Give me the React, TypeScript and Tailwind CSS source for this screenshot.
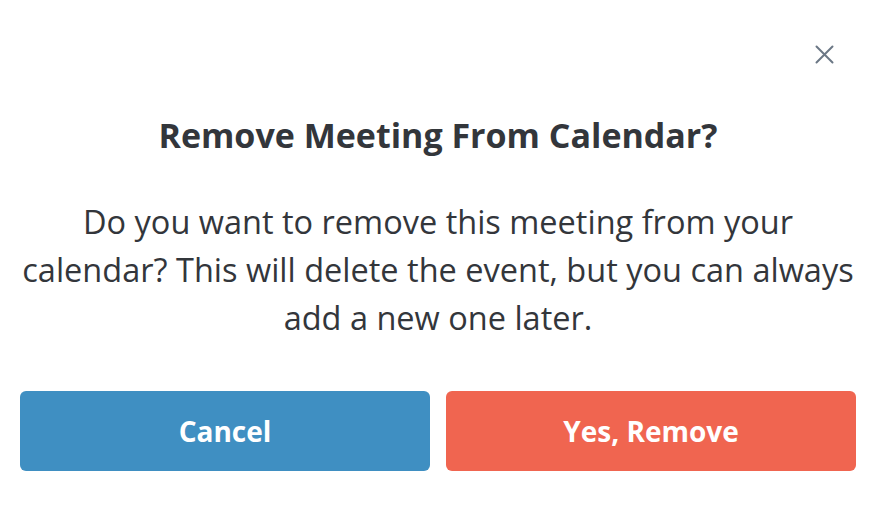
export default function App() {
  return (
    <div className="relative flex h-[524px] w-[878px] flex-col bg-white pl-5 pr-[22px] font-['Open_Sans','Noto_Sans',sans-serif] text-[#33363b]">
      <button
        type="button"
        className="absolute left-[814px] top-[44px] text-[#6b7785]"
        aria-label="Close"
      >
        <svg width="21" height="21" viewBox="0 0 21 21" fill="none" stroke="currentColor" strokeWidth="2" strokeLinecap="round">
          <path d="M2.5 2.5L18.5 18.5M18.5 2.5L2.5 18.5" />
        </svg>
      </button>
      <h2 className="mt-[113px] text-center text-[34px] font-bold leading-[44px]">
        Remove Meeting From Calendar?
      </h2>
      <p className="mt-[41px] text-center text-[32.5px] leading-[48px]">
        Do you want to remove this meeting from your calendar? This will delete the event, but you can always add a new one later.
      </p>
      <div className="mt-[49px] grid grid-cols-2 gap-4">
        <button type="button" className="h-20 rounded-md bg-[#3f8fc2] text-[28px] font-bold text-white">
          Cancel
        </button>
        <button type="button" className="h-20 rounded-md bg-[#f06550] text-[28px] font-bold text-white">
          Yes, Remove
        </button>
      </div>
    </div>
  );
}
